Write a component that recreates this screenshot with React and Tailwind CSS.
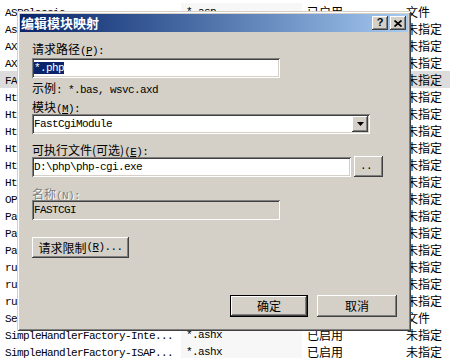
import React from "react";

// shared font classes: SimSun-like half-width ascii + CJK
const CJK = "font-['Noto_Sans_CJK_SC',sans-serif] text-[12px]";
const MONO = "font-['Liberation_Mono',monospace] text-[11px] tracking-[-0.6px]";

// classic 3D edges
const RAISED =
  "shadow-[inset_-1px_-1px_#404040,inset_1px_1px_#ffffff,inset_-2px_-2px_#808080,inset_2px_2px_#d4d0c8]";
const SUNKEN =
  "shadow-[inset_1px_1px_#808080,inset_-1px_-1px_#ffffff,inset_2px_2px_#404040,inset_-2px_-2px_#d4d0c8]";
const FRAME =
  "shadow-[inset_1px_1px_#d4d0c8,inset_-1px_-1px_#404040,inset_2px_2px_#ffffff,inset_-2px_-2px_#808080]";

const rows = [
  ["ASPClassic", "*.asp", "已启用", "文件"],
  ["AssemblyResourceLoader-Int...", "WebResource.axd", "已启用", "未指定"],
  ["AXD-ISAPI-4.0_64bit", "*.axd", "已启用", "未指定"],
  ["AXD-ISAPI-4.0_32bit", "*.axd", "已启用", "未指定"],
  ["FASTCGI", "*.php", "已启用", "未指定"],
  ["HttpRemotingHandlerFactor...", "*.rem", "已启用", "未指定"],
  ["HttpRemotingHandlerFactor...", "*.rem", "已启用", "未指定"],
  ["HttpRemotingHandlerFactor...", "*.rem", "已启用", "未指定"],
  ["HttpRemotingHandlerFactor...", "*.soap", "已启用", "未指定"],
  ["HttpRemotingHandlerFactor...", "*.soap", "已启用", "未指定"],
  ["HttpRemotingHandlerFactor...", "*.soap", "已启用", "未指定"],
  ["OPTIONSVerbHandler", "*", "已启用", "未指定"],
  ["PageHandlerFactory-Integr...", "*.aspx", "已启用", "未指定"],
  ["PageHandlerFactory-ISAPI-...", "*.aspx", "已启用", "未指定"],
  ["PageHandlerFactory-ISAPI-...", "*.aspx", "已启用", "未指定"],
  ["rules-Integrated", "*.rules", "已启用", "未指定"],
  ["rules-ISAPI-2.0", "*.rules", "已启用", "未指定"],
  ["rules-ISAPI-4.0", "*.rules", "已启用", "未指定"],
  ["SecurityCertificate", "*.cer", "已启用", "文件"],
  ["SimpleHandlerFactory-Inte...", "*.ashx", "已启用", "未指定"],
  ["SimpleHandlerFactory-ISAP...", "*.ashx", "已启用", "未指定"],
];

function Label({ cjk, keyChar, tail = "):", disabled }) {
  return (
    <div
      className={`h-[14px] leading-[14px] whitespace-nowrap ${
        disabled ? "text-[#808080] [text-shadow:1px_1px_0_#ffffff]" : "text-black"
      }`}
    >
      <span className={CJK}>{cjk}</span>
      <span className={MONO}>
        (<u>{keyChar}</u>
        {tail}
      </span>
    </div>
  );
}

export default function App() {
  return (
    <div className="relative w-[450px] h-[358px] overflow-hidden bg-white text-black">
      {/* handler mapping list behind the dialog */}
      <div className="flex flex-col pt-[3px]">
        {rows.map((r, i) => (
          <div
            key={i}
            className={`flex h-[17px] items-center whitespace-nowrap leading-[14px] ${
              i === 4 ? "bg-[#dcdcdc]" : ""
            }`}
          >
            <div className="w-[181px] pl-[5px] overflow-hidden">
              <span className={MONO}>{r[0]}</span>
            </div>
            <div
              className={`w-[121px] h-full pl-[5px] flex items-center ${
                i === 4 ? "" : "bg-[#f7f7f7]"
              }`}
            >
              <span className={MONO}>{r[1]}</span>
            </div>
            <div className="w-[99px] pl-[5px]">
              <span className={CJK}>{r[2]}</span>
            </div>
            <div className="flex-1 pl-[5px]">
              <span className={CJK}>{r[3]}</span>
            </div>
          </div>
        ))}
      </div>

      {/* dialog window */}
      <div
        className={`absolute left-[17px] top-[11px] w-[394px] h-[320px] bg-[#d4d0c8] p-[3px] flex flex-col ${FRAME}`}
      >
        {/* title bar */}
        <div className="h-[18px] flex items-center bg-linear-to-r from-[#0a246a] to-[#a6caf0]">
          <span className="pl-[1px] font-['Noto_Sans_CJK_SC',sans-serif] text-[13px] font-bold text-white leading-[18px]">
            编辑模块映射
          </span>
          <div className="ml-auto mr-[2px] flex gap-[2px]">
            <div
              className={`w-[16px] h-[14px] bg-[#d4d0c8] flex items-center justify-center ${RAISED}`}
            >
              <span className="font-['Liberation_Sans',sans-serif] text-[11px] font-bold leading-none pb-[1px]">
                ?
              </span>
            </div>
            <div
              className={`w-[16px] h-[14px] bg-[#d4d0c8] flex items-center justify-center ${RAISED}`}
            >
              <svg width="8" height="7" viewBox="0 0 8 7">
                <path
                  d="M0.5 0.5 L7.5 6.5 M7.5 0.5 L0.5 6.5"
                  stroke="black"
                  strokeWidth="1.7"
                  fill="none"
                />
              </svg>
            </div>
          </div>
        </div>

        {/* form body */}
        <div className="flex flex-col pl-[12px]">
          <div className="mt-[9px]">
            <Label cjk="请求路径" keyChar="P" />
          </div>
          <div
            className={`mt-[3px] w-[248px] h-[20px] bg-white pl-[2px] flex items-center ${SUNKEN}`}
          >
            <span
              className={`${MONO} bg-[#0a246a] text-white h-[12px] leading-[12px] inline-block`}
            >
              *.php
            </span>
          </div>

          <div className="mt-[2px] h-[14px] leading-[14px] whitespace-nowrap">
            <span className={CJK}>示例</span>
            <span className={MONO}>: *.bas, wsvc.axd</span>
          </div>

          <div className="mt-[5px]">
            <Label cjk="模块" keyChar="M" />
          </div>
          <div
            className={`mt-[1px] w-[338px] h-[20px] bg-white pl-[2px] pr-[2px] flex items-center ${SUNKEN}`}
          >
            <span className={MONO}>FastCgiModule</span>
            <div
              className={`ml-auto w-[16px] h-[16px] bg-[#d4d0c8] flex items-center justify-center ${RAISED}`}
            >
              <svg width="7" height="4" viewBox="0 0 7 4">
                <path d="M0 0 H7 L3.5 4 Z" fill="black" />
              </svg>
            </div>
          </div>

          <div className="mt-[8px]">
            <Label cjk="可执行文件(可选)" keyChar="E" />
          </div>
          <div className="h-[21px] flex gap-[3px]">
            <div
              className={`mt-[1px] w-[319px] h-[20px] bg-white pl-[2px] flex items-center ${SUNKEN}`}
            >
              <span className={MONO}>D:\php\php-cgi.exe</span>
            </div>
            <div
              className={`w-[29px] h-[21px] bg-[#d4d0c8] flex items-center pl-[6px] ${RAISED}`}
            >
              <span className={MONO}>..</span>
            </div>
          </div>

          <div className="mt-[9px]">
            <Label cjk="名称" keyChar="N" disabled />
          </div>
          <div
            className={`w-[248px] h-[20px] bg-[#d4d0c8] pl-[2px] flex items-center ${SUNKEN}`}
          >
            <span className={MONO}>FASTCGI</span>
          </div>

          <div
            className={`mt-[17px] w-[97px] h-[21px] bg-[#d4d0c8] flex items-center justify-center whitespace-nowrap ${RAISED}`}
          >
            <span className={CJK}>请求限制</span>
            <span className={MONO}>
              (<u>R</u>)...
            </span>
          </div>
        </div>

        {/* OK / Cancel */}
        <div className="mt-[37px] flex justify-end gap-[9px] pr-[11px]">
          <div
            className={`w-[78px] h-[22px] border border-black bg-[#d4d0c8] flex items-center justify-center ${RAISED}`}
          >
            <span className={CJK}>确定</span>
          </div>
          <div
            className={`w-[80px] h-[22px] bg-[#d4d0c8] flex items-center justify-center ${RAISED}`}
          >
            <span className={CJK}>取消</span>
          </div>
        </div>
      </div>
    </div>
  );
}
